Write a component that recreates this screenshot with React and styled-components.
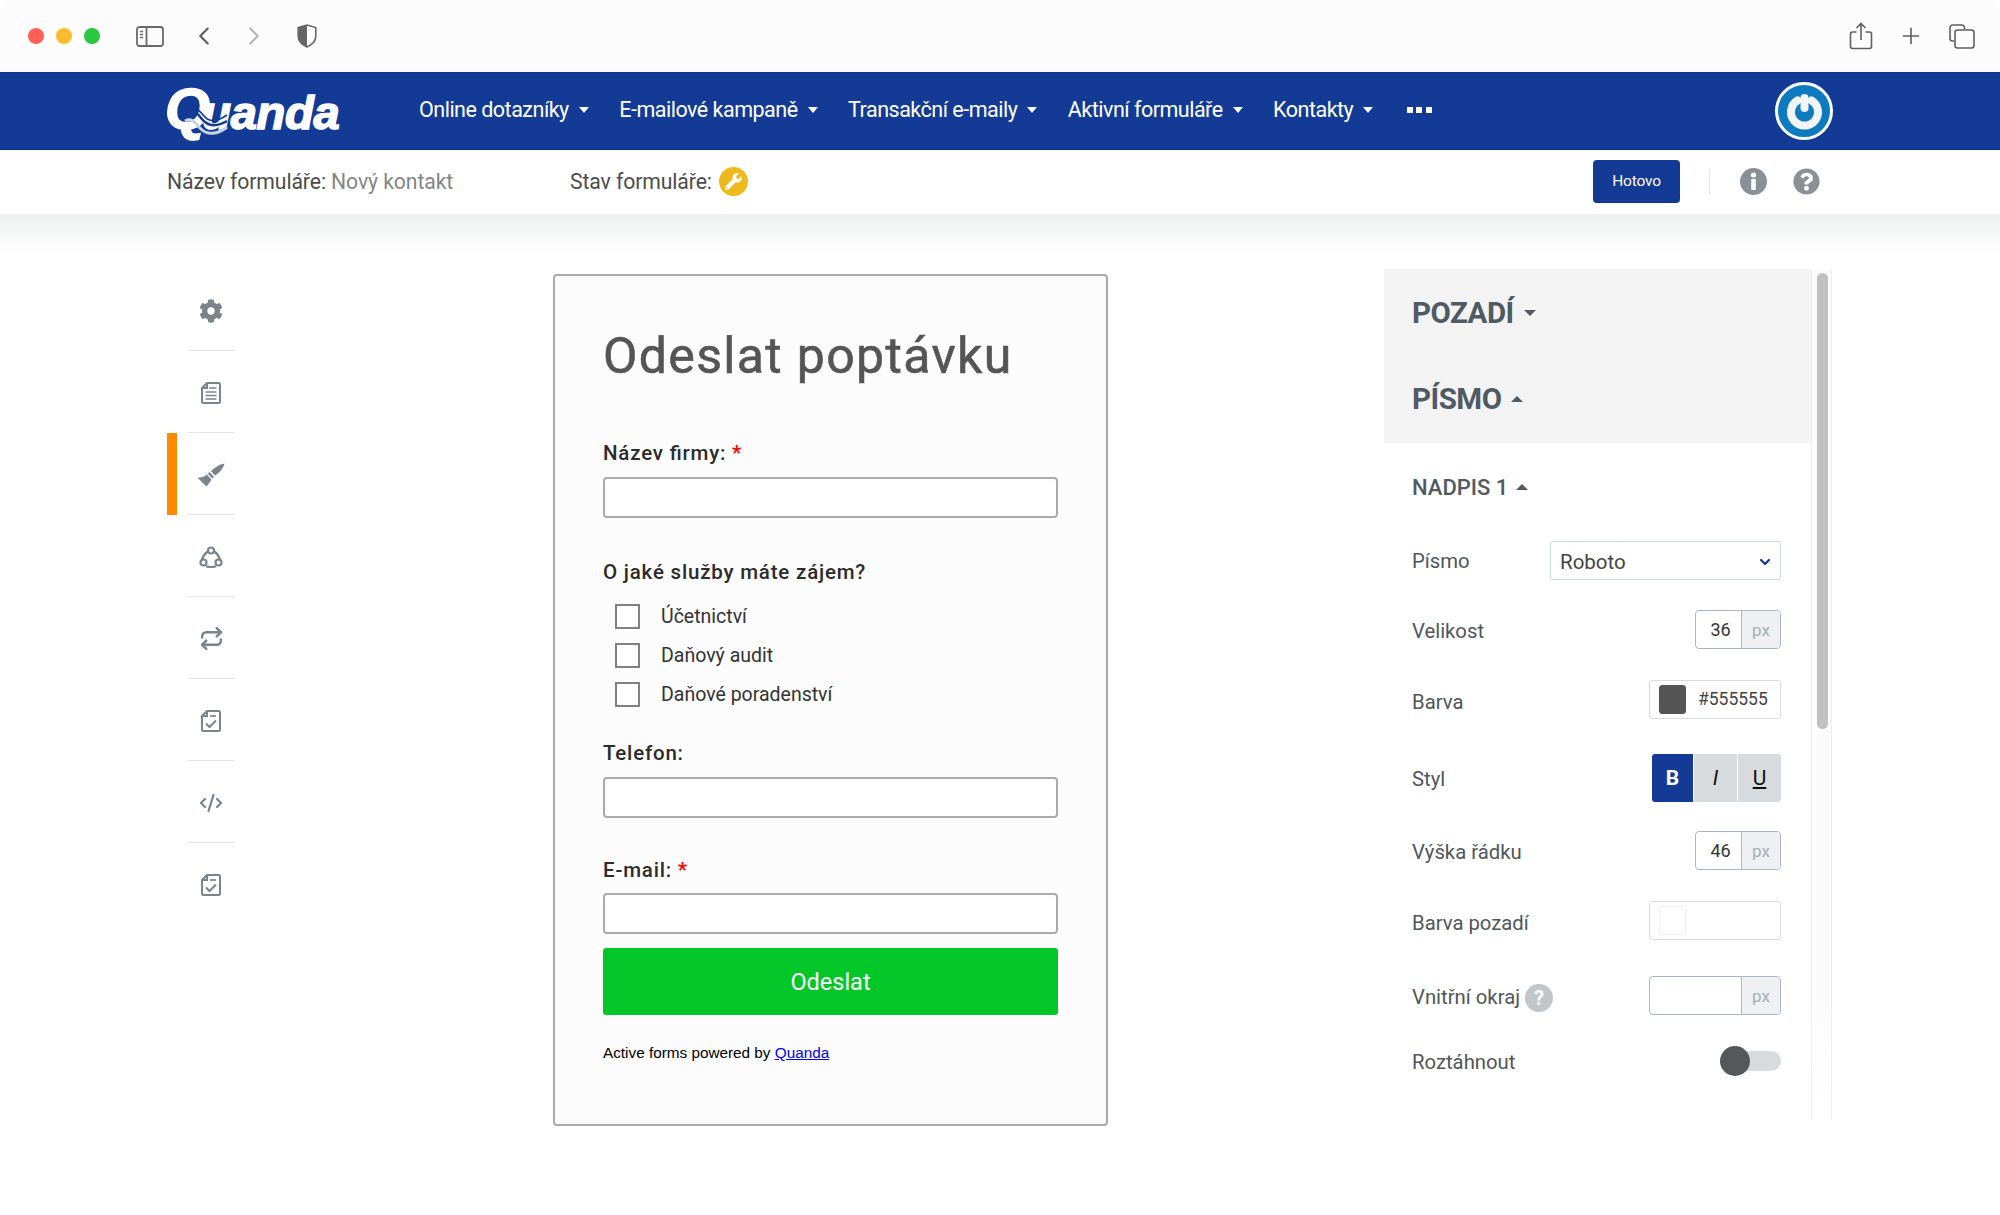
import React from 'react';
import styled, { createGlobalStyle } from 'styled-components';
import { ChevronLeft, ChevronRight, Plus, Repeat, CodeXml, ChevronDown } from 'lucide-react';
import { FaCog, FaQuestionCircle, FaWrench } from 'react-icons/fa';

const GlobalStyle = createGlobalStyle`
  html, body { margin: 0; padding: 0; background: #fff; }
  body { font-family: Roboto, "Noto Sans", sans-serif; color: #555; }
  * { box-sizing: border-box; }
`;

const Page = styled.div`
  width: 2000px;
  height: 1215px;
  overflow: hidden;
  background: #fff;
  border-radius: 12px;
`;

/* browser chrome */
const Chrome = styled.div`
  height: 72px;
  background: #fcfcfc;
  display: flex;
  align-items: center;
  padding: 0 25px 0 28px;
  color: #6a6a6a;
`;
const Lights = styled.div`
  display: flex;
  gap: 12px;
  margin-right: 36px;
`;
const Light = styled.span`
  width: 16px;
  height: 16px;
  border-radius: 50%;
  background: ${p => p.$color};
`;
const ChromeLeft = styled.div`
  display: flex;
  align-items: center;
  flex: 1;
`;
const ChromeRight = styled.div`
  display: flex;
  align-items: center;
  gap: 25px;
`;
const ChromeBtn = styled.span`
  display: flex;
  margin-left: ${p => p.$left || 0}px;
  color: ${p => p.$color || '#5f5f5f'};
`;

/* main nav */
const NavBar = styled.div`
  height: 78px;
  background: #133a94;
  border-top: 1px solid #0b2f8a;
  border-bottom: 1px solid #0b2f8a;
  display: flex;
  align-items: center;
  padding: 0 167px 0 165px;
  color: #fff;
`;
const LogoBox = styled.div`
  position: relative;
  width: 176px;
  margin-right: 78px;
  display: flex;
  align-items: baseline;
  font-family: "Liberation Sans", Arial, sans-serif;
  font-weight: 700;
  font-style: italic;
  color: #fff;
  -webkit-text-stroke: 1.6px #fff;
  white-space: nowrap;
`;
const LogoQ = styled.span`
  font-size: 58px;
  line-height: 50px;
  letter-spacing: -8px;
`;
const LogoRest = styled.span`
  font-size: 47px;
  line-height: 50px;
  letter-spacing: -0.2px;
`;
const LogoWave = styled.svg`
  position: absolute;
  left: 14px;
  top: 22px;
`;
const NavList = styled.div`
  display: flex;
  align-items: center;
  flex: 1;
  padding-bottom: 3px;
`;
const NavItem = styled.div`
  display: flex;
  align-items: center;
  font-size: 21.5px;
  letter-spacing: -0.5px;
  margin-right: 30.5px;
  white-space: nowrap;
`;
const Tri = styled.span`
  display: inline-block;
  width: 0;
  height: 0;
  border-left: ${p => p.$size || 5.5}px solid transparent;
  border-right: ${p => p.$size || 5.5}px solid transparent;
  ${p => (p.$up ? 'border-bottom' : 'border-top')}: ${p => (p.$size || 5.5) + 0.5}px solid ${p => p.$color || '#fff'};
  margin-left: ${p => p.$gap || 10}px;
`;
const More = styled.div`
  display: flex;
  gap: 3.5px;
  margin-left: 3px;
`;
const MoreDot = styled.span`
  width: 6px;
  height: 6px;
  background: #fff;
`;
const Avatar = styled.div`
  width: 58px;
  height: 58px;
  border-radius: 50%;
  border: 3px solid #fff;
  background: #0e7abf;
  display: flex;
  align-items: center;
  justify-content: center;
`;

/* form sub header */
const SubBar = styled.div`
  height: 64px;
  background: #fff;
  display: flex;
  align-items: center;
  padding: 0 180px 1px 167px;
  font-size: 21.2px;
  letter-spacing: -0.1px;
`;
const SubName = styled.div`
  width: 403px;
  color: #4c4c4c;
  white-space: nowrap;
`;
const Muted = styled.span`
  color: #858585;
`;
const SubState = styled.div`
  display: flex;
  align-items: center;
  gap: 7px;
  flex: 1;
  color: #4c4c4c;
`;
const StateBadge = styled.span`
  width: 29px;
  height: 29px;
  border-radius: 50%;
  background: #eeb91c;
  color: #fff;
  display: flex;
  align-items: center;
  justify-content: center;
`;
const DoneBtn = styled.button`
  width: 87px;
  height: 43px;
  background: #133a94;
  border: 0;
  border-bottom: 1px solid #0b2f8a;
  border-radius: 4px;
  color: #fff;
  font: 400 15.5px Roboto, sans-serif;
  letter-spacing: -0.2px;
  margin-right: 29px;
  padding: 0;
`;
const SubSep = styled.span`
  width: 1px;
  height: 26px;
  background: #e3e4e5;
  margin-right: 30px;
`;
const HelpIcons = styled.div`
  display: flex;
  align-items: center;
  gap: 26px;
  color: #8a9096;
`;
const Shade = styled.div`
  height: 40px;
  background: linear-gradient(#eff0f0, #fff);
`;

/* content */
const Main = styled.div`
  display: flex;
  align-items: flex-start;
  padding-left: 167px;
  margin-top: 15px;
`;
const SideNav = styled.div`
  width: 68px;
  margin-right: 318px;
`;
const SideItem = styled.div`
  height: 82px;
  display: flex;
  align-items: center;
  justify-content: center;
  padding: 1px 0 0 20px;
  position: relative;
  color: #7b848b;
  &::after {
    content: '';
    position: absolute;
    left: 20px;
    right: 0;
    bottom: 0;
    height: 1px;
    background: ${p => (p.$last ? 'transparent' : '#e4e5e6')};
  }
  ${p => p.$active && `
    &::before {
      content: '';
      position: absolute;
      left: 0;
      top: 0;
      width: 10px;
      height: 82px;
      background: #ff8a00;
    }
  `}
`;

const FormCard = styled.div`
  width: 555px;
  height: 852px;
  margin-top: 5px;
  background: #fcfcfc;
  border: 2px solid #aaa;
  border-radius: 4px;
  padding: 0 48px;
  margin-right: 276px;
`;
const FormTitle = styled.h1`
  margin: 50px 0 0;
  font-size: 50px;
  line-height: 60px;
  font-weight: 400;
  letter-spacing: 1.35px;
  -webkit-text-stroke: 0.6px #555;
  color: #555;
`;
const FieldLabel = styled.div`
  margin-top: ${p => p.$top}px;
  font-size: 20.5px;
  line-height: 24px;
  font-weight: 500;
  letter-spacing: 0.8px;
  font-variant-ligatures: common-ligatures;
  font-feature-settings: "liga" 1;
  color: #2b2b2b;
`;
const Req = styled.span`
  color: #f00;
  font-weight: 700;
`;
const TextBox = styled.div`
  height: 41px;
  margin-top: ${p => p.$top}px;
  background: #fff;
  border: 2px solid #aaa;
  border-radius: 4px;
`;
const CheckRow = styled.div`
  display: flex;
  align-items: center;
  height: 39px;
  padding-left: 12px;
  font-size: 19.5px;
  color: #333;
`;
const CheckGroup = styled.div`
  margin-top: 13px;
`;
const CheckBox = styled.span`
  width: 25px;
  height: 25px;
  background: #fff;
  border: 2px solid #808080;
  margin-right: 21px;
`;
const SendBtn = styled.button`
  display: block;
  width: 100%;
  height: 67px;
  margin-top: 14px;
  background: #03c728;
  border: 0;
  border-radius: 3px;
  color: #fff;
  font: 400 23.5px Roboto, sans-serif;
`;
const Powered = styled.div`
  margin-top: 28px;
  font: 400 15.3px/20px "Liberation Sans", Arial, sans-serif;
  color: #000;
`;
const PoweredLink = styled.a`
  color: #00e;
  text-decoration: underline;
`;

/* settings panel */
const Panel = styled.div`
  width: 448px;
  height: 851px;
  display: flex;
  align-items: stretch;
`;
const PanelBody = styled.div`
  width: 427px;
  padding-bottom: 20px;
`;
const PanelTop = styled.div`
  height: 174px;
  background: #f3f3f3;
  padding: 26px 28px 0;
`;
const PanelHead = styled.div`
  display: flex;
  align-items: center;
  height: 36px;
  margin-bottom: 50px;
  font-size: 29.5px;
  font-weight: 700;
  letter-spacing: -0.5px;
  color: #505a63;
`;
const SubHead = styled.div`
  display: flex;
  align-items: center;
  height: 28px;
  margin: 30px 0 0 28px;
  font-size: 22px;
  font-weight: 500;
  color: #505a63;
`;
const Row = styled.div`
  display: flex;
  align-items: center;
  justify-content: space-between;
  height: ${p => p.$height}px;
  margin-top: ${p => p.$top}px;
  padding: 0 30px 0 28px;
`;
const RowLabel = styled.div`
  display: flex;
  align-items: center;
  gap: 5px;
  font-size: 20.3px;
  color: #50565b;
  padding-top: ${p => p.$pad ?? 2}px;
`;
const SelectBox = styled.div`
  width: 231px;
  height: 39px;
  display: flex;
  align-items: center;
  justify-content: space-between;
  padding: 2px 7px 0 9px;
  background: #fff;
  border: 1px solid #ced4dc;
  border-radius: 3px;
  font-size: 20.5px;
  color: #444;
`;
const UnitGroup = styled.div`
  width: ${p => p.$width}px;
  height: 39px;
  display: flex;
  background: #fff;
  border: 1px solid #a9b6cb;
  border-radius: 4px;
  overflow: hidden;
`;
const UnitValue = styled.div`
  flex: 1;
  display: flex;
  align-items: center;
  justify-content: center;
  padding-left: 4px;
  font-size: 18px;
  color: #333;
`;
const UnitSuffix = styled.div`
  width: 39px;
  display: flex;
  align-items: center;
  justify-content: center;
  background: #eef0f2;
  border-left: 1px solid #a9b6cb;
  font-size: 17px;
  color: #a9adb1;
`;
const ColorBox = styled.div`
  width: 132px;
  height: 39px;
  display: flex;
  align-items: center;
  gap: 12px;
  padding-left: 9px;
  background: #fff;
  border: 1px solid #d8dce2;
  border-radius: 3px;
  font-size: 17.5px;
  color: #444;
`;
const Swatch = styled.span`
  width: 27px;
  height: 29px;
  border-radius: 3px;
  background: ${p => p.$color};
  border: 1px solid ${p => (p.$color === '#fff' ? '#eeeeee' : p.$color)};
`;
const StyleGroup = styled.div`
  display: flex;
  gap: 1px;
  height: 48px;
  border-radius: 3px;
  overflow: hidden;
`;
const StyleBtn = styled.span`
  width: ${p => p.$width}px;
  display: flex;
  align-items: center;
  justify-content: center;
  font-size: 21px;
  color: ${p => (p.$on ? '#fff' : '#111')};
  background: ${p => (p.$on ? '#133a94' : '#d7dbde')};
  font-weight: ${p => (p.$on ? 700 : 400)};
  font-style: ${p => (p.$italic ? 'italic' : 'normal')};
  text-decoration: ${p => (p.$under ? 'underline' : 'none')};
`;
const HintBadge = styled.span`
  width: 28px;
  height: 28px;
  border-radius: 50%;
  background: #c1c6cb;
  color: #fff;
  display: flex;
  align-items: center;
  justify-content: center;
  font-size: 20px;
  font-weight: 700;
  margin-top: 2px;
`;
const Toggle = styled.div`
  position: relative;
  width: 61px;
  height: 20px;
  border-radius: 10px;
  background: #d7dbde;
`;
const Knob = styled.span`
  position: absolute;
  left: 0;
  top: -5px;
  width: 30px;
  height: 30px;
  border-radius: 50%;
  background: #55585b;
`;
const ScrollTrack = styled.div`
  width: 21px;
  height: 851px;
  padding: 4px 4px 0 5px;
  background: linear-gradient(#fbfbfb 85%, #fff);
  border-left: 1px solid #eeeeee;
  border-right: 1px solid #eeeeee;
`;
const ScrollThumb = styled.div`
  width: 11px;
  height: 456px;
  background: #c1c1c1;
  border-radius: 6px;
`;

/* drawn icons */
const SidebarIcon = () => (
  <svg width="28" height="21" viewBox="0 0 28 21" fill="none" stroke="#6a6a6a" strokeWidth="1.8">
    <rect x="1" y="1" width="26" height="19" rx="2.5" />
    <path d="M10.5 1v19" />
    <path d="M4 5.5h3M4 8.5h3M4 11.5h3" strokeWidth="1.4" />
  </svg>
);
const ShieldIcon = () => (
  <svg width="20" height="24" viewBox="0 0 20 24">
    <path d="M10 1 L18.8 3.6 V12 C18.8 17.5 14.5 21 10 23 C5.5 21 1.2 17.5 1.2 12 V3.6 Z" fill="none" stroke="#666" strokeWidth="1.6" />
    <path d="M10 1 L1.2 3.6 V12 C1.2 17.5 5.5 21 10 23 Z" fill="#666" />
  </svg>
);
const ShareIcon = () => (
  <svg width="24" height="28" viewBox="0 0 24 28" fill="none" stroke="#5f5f5f" strokeWidth="1.6">
    <path d="M7.5 10H3.5A2 2 0 0 0 1.5 12V24.5A2 2 0 0 0 3.5 26.5H20.5A2 2 0 0 0 22.5 24.5V12A2 2 0 0 0 20.5 10H16.5" />
    <path d="M12 18V1.5M7.5 6L12 1.5L16.5 6" />
  </svg>
);
const TabsIcon = () => (
  <svg width="26" height="25" viewBox="0 0 26 25" fill="none" stroke="#5f5f5f" strokeWidth="1.6">
    <path d="M5 17H3.5A2.5 2.5 0 0 1 1 14.5V3.5A2.5 2.5 0 0 1 3.5 1H13A2.5 2.5 0 0 1 15.5 3.5V5" />
    <rect x="6" y="6" width="19" height="18" rx="2.5" />
  </svg>
);
const WaveMark = () => (
  <LogoWave width="50" height="32" viewBox="0 0 50 32" fill="none">
    <path d="M2 7C10 0 16 4 22 12C28 20 36 22 48 15" stroke="#133a94" strokeWidth="2.5" />
    <path d="M6 2C14 -2 20 4 25 10C30 16 38 16 48 9" stroke="#133a94" strokeWidth="1.6" />
    <path d="M6 15C13 11 16 17 22 23C28 29 38 29 48 21" stroke="#c9d6ea" strokeWidth="3" />
  </LogoWave>
);
const PowerMark = () => (
  <svg width="40" height="40" viewBox="0 0 40 40" fill="none" stroke="#f1f5f9" strokeWidth="8" strokeLinecap="round">
    <path d="M13.5 9.5A13.5 13.5 0 1 0 27.5 9.5" />
    <path d="M20.5 7V17" />
  </svg>
);
const InfoIcon = () => (
  <svg width="27" height="27" viewBox="0 0 27 27">
    <circle cx="13.5" cy="13.5" r="13.5" fill="currentColor" />
    <circle cx="13.5" cy="7" r="2.6" fill="#fff" />
    <rect x="11.2" y="11" width="4.6" height="11" rx="1" fill="#fff" />
  </svg>
);
const DocIcon = () => (
  <svg width="20" height="22" viewBox="0 0 20 22" fill="none" stroke="currentColor" strokeWidth="2">
    <path d="M6 1H17.5A1.5 1.5 0 0 1 19 2.5V19.5A1.5 1.5 0 0 1 17.5 21H2.5A1.5 1.5 0 0 1 1 19.5V6Z" />
    <path d="M6 1V6H1" />
    <path d="M8 6h7.5M4.5 10h11M4.5 13.5h11M4.5 17h11" strokeWidth="1.7" />
  </svg>
);
const BrushIcon = () => (
  <svg width="28" height="24" viewBox="0 0 28 24" fill="currentColor">
    <path d="M27.5 .6C23 1 19 3.5 14 8L18 12.5C23 9.5 26.5 5 27.5 .6Z" />
    <path d="M12.5 9L17 13.8L15.3 15.5L10.8 10.7Z" />
    <path d="M9.8 11.5L14.5 16.5C13 19 11 21.8 9.5 23.5L.5 14.8C4 14.8 7.5 13.8 9.8 11.5Z" />
  </svg>
);
const NodesIcon = () => (
  <svg width="24" height="22" viewBox="0 0 24 22" fill="none" stroke="currentColor" strokeWidth="2.2">
    <circle cx="12" cy="4.5" r="3" />
    <circle cx="4.5" cy="16.5" r="3" />
    <circle cx="19.5" cy="16.5" r="3" />
    <path d="M8.7 5.5C6 7.5 3.8 10.5 2.9 13.8M15.3 5.5C18 7.5 20.2 10.5 21.1 13.8M7 20.2C10 21.2 14 21.2 17 20.2" />
  </svg>
);
const CheckDocIcon = () => (
  <svg width="20" height="22" viewBox="0 0 20 22" fill="none" stroke="currentColor" strokeWidth="2">
    <path d="M6 1H17.5A1.5 1.5 0 0 1 19 2.5V19.5A1.5 1.5 0 0 1 17.5 21H2.5A1.5 1.5 0 0 1 1 19.5V6Z" />
    <path d="M6 1V6H1" />
    <path d="M9 6h6" strokeWidth="1.7" />
    <path d="M5 13.5L8.5 17L15 10.5" />
  </svg>
);

const NAV_ITEMS = ['Online dotazníky', 'E-mailové kampaně', 'Transakční e-maily', 'Aktivní formuláře', 'Kontakty'];

const SIDE_ICONS = [
  { key: 'settings', icon: <FaCog size={24} /> },
  { key: 'content', icon: <DocIcon /> },
  { key: 'design', icon: <BrushIcon />, active: true },
  { key: 'share', icon: <NodesIcon /> },
  { key: 'flow', icon: <Repeat size={25} strokeWidth={2.4} /> },
  { key: 'check', icon: <CheckDocIcon /> },
  { key: 'code', icon: <CodeXml size={24} strokeWidth={2.2} /> },
  { key: 'check2', icon: <CheckDocIcon />, last: true },
];

const App = () => (
  <Page>
    <GlobalStyle />
    <Chrome>
      <ChromeLeft>
        <Lights>
          <Light $color="#ff5f57" />
          <Light $color="#febc2e" />
          <Light $color="#28c840" />
        </Lights>
        <SidebarIcon />
        <ChromeBtn $left={25}><ChevronLeft size={30} strokeWidth={1.7} /></ChromeBtn>
        <ChromeBtn $left={20} $color="#b5b5b5"><ChevronRight size={30} strokeWidth={1.7} /></ChromeBtn>
        <ChromeBtn $left={28}><ShieldIcon /></ChromeBtn>
      </ChromeLeft>
      <ChromeRight>
        <ShareIcon />
        <Plus size={26} strokeWidth={1.5} color="#5f5f5f" />
        <TabsIcon />
      </ChromeRight>
    </Chrome>

    <NavBar>
      <LogoBox>
        <LogoQ>Q</LogoQ>
        <LogoRest>uanda</LogoRest>
        <WaveMark />
      </LogoBox>
      <NavList>
        {NAV_ITEMS.map(item => (
          <NavItem key={item}>
            {item}
            <Tri />
          </NavItem>
        ))}
        <More>
          <MoreDot />
          <MoreDot />
          <MoreDot />
        </More>
      </NavList>
      <Avatar>
        <PowerMark />
      </Avatar>
    </NavBar>

    <SubBar>
      <SubName>Název formuláře: <Muted>Nový kontakt</Muted></SubName>
      <SubState>
        Stav formuláře:
        <StateBadge><FaWrench size={17} /></StateBadge>
      </SubState>
      <DoneBtn>Hotovo</DoneBtn>
      <SubSep />
      <HelpIcons>
        <InfoIcon />
        <FaQuestionCircle size={27} />
      </HelpIcons>
    </SubBar>
    <Shade />

    <Main>
      <SideNav>
        {SIDE_ICONS.map(item => (
          <SideItem key={item.key} $active={item.active} $last={item.last}>
            {item.icon}
          </SideItem>
        ))}
      </SideNav>

      <FormCard>
        <FormTitle>Odeslat poptávku</FormTitle>
        <FieldLabel $top={55}>Název firmy:<Req> *</Req></FieldLabel>
        <TextBox $top={12} />
        <FieldLabel $top={42}>O jaké služby máte zájem?</FieldLabel>
        <CheckGroup>
          <CheckRow><CheckBox />Účetnictví</CheckRow>
          <CheckRow><CheckBox />Daňový audit</CheckRow>
          <CheckRow><CheckBox />Daňové poradenství</CheckRow>
        </CheckGroup>
        <FieldLabel $top={27}>Telefon:</FieldLabel>
        <TextBox $top={12} />
        <FieldLabel $top={40}>E-mail:<Req> *</Req></FieldLabel>
        <TextBox $top={11} />
        <SendBtn>Odeslat</SendBtn>
        <Powered>Active forms powered by <PoweredLink href="#">Quanda</PoweredLink></Powered>
      </FormCard>

      <Panel>
        <PanelBody>
          <PanelTop>
            <PanelHead>POZADÍ<Tri $color="#505a63" $size={6} /></PanelHead>
            <PanelHead>PÍSMO<Tri $up $color="#505a63" $size={6} /></PanelHead>
          </PanelTop>
          <SubHead>NADPIS 1<Tri $up $color="#505a63" $size={6} $gap={8} /></SubHead>
          <Row $height={39} $top={40}>
            <RowLabel $pad={0}>Písmo</RowLabel>
            <SelectBox>Roboto<ChevronDown size={16} strokeWidth={3.4} color="#133a94" /></SelectBox>
          </Row>
          <Row $height={39} $top={30}>
            <RowLabel>Velikost</RowLabel>
            <UnitGroup $width={86}><UnitValue>36</UnitValue><UnitSuffix>px</UnitSuffix></UnitGroup>
          </Row>
          <Row $height={40} $top={30}>
            <RowLabel $pad={6}>Barva</RowLabel>
            <ColorBox><Swatch $color="#555" />#555555</ColorBox>
          </Row>
          <Row $height={48} $top={35}>
            <RowLabel>Styl</RowLabel>
            <StyleGroup>
              <StyleBtn $on $width={41}>B</StyleBtn>
              <StyleBtn $italic $width={43}>I</StyleBtn>
              <StyleBtn $under $width={43}>U</StyleBtn>
            </StyleGroup>
          </Row>
          <Row $height={39} $top={29}>
            <RowLabel>Výška řádku</RowLabel>
            <UnitGroup $width={86}><UnitValue>46</UnitValue><UnitSuffix>px</UnitSuffix></UnitGroup>
          </Row>
          <Row $height={40} $top={30}>
            <RowLabel $pad={6}>Barva pozadí</RowLabel>
            <ColorBox><Swatch $color="#fff" /></ColorBox>
          </Row>
          <Row $height={39} $top={36}>
            <RowLabel>Vnitřní okraj<HintBadge>?</HintBadge></RowLabel>
            <UnitGroup $width={132}><UnitValue /><UnitSuffix>px</UnitSuffix></UnitGroup>
          </Row>
          <Row $height={20} $top={36}>
            <RowLabel>Roztáhnout</RowLabel>
            <Toggle><Knob /></Toggle>
          </Row>
        </PanelBody>
        <ScrollTrack>
          <ScrollThumb />
        </ScrollTrack>
      </Panel>
    </Main>
  </Page>
);

export default App;
